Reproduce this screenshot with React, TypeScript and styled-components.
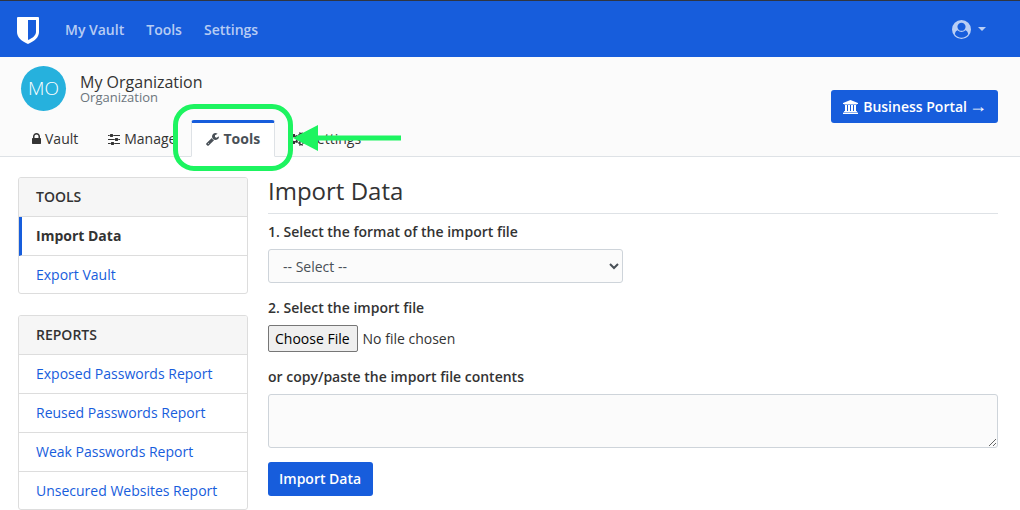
import React from "react";
import styled, { createGlobalStyle, css } from "styled-components";

const blue = "#175ddc";
const ink = "#333333";
const line = "#dddddd";
const marker = "#1df460";

const GlobalStyle = createGlobalStyle`
  *, *::before, *::after { box-sizing: border-box; }
  body {
    margin: 0;
    background: #ffffff;
    color: ${ink};
    font: 14px/22px "Open Sans", sans-serif;
  }
  a { color: ${blue}; text-decoration: none; }
  button, input, select, textarea { font: inherit; }
`;

const Navbar = styled.nav`
  display: flex;
  align-items: center;
  height: 57px;
  padding: 2px 34px 0 17px;
  border-top: 1px solid #2f3542;
  background: ${blue};
`;

const Brand = styled.a`
  display: flex;
  margin-right: 26px;
`;

const NavLinks = styled.div`
  display: flex;
  flex: 1;
  gap: 22px;
`;

const NavLink = styled.a`
  color: rgba(255, 255, 255, 0.7);
  font-weight: 600;
`;

const AccountButton = styled.button`
  display: flex;
  align-items: center;
  gap: 7px;
  padding: 0 0 2px;
  border: 0;
  background: none;
  color: rgba(255, 255, 255, 0.7);
`;

const Caret = styled.span`
  border: 4px solid transparent;
  border-top-color: currentColor;
  border-bottom: 0;
`;

const OrgHeader = styled.header`
  display: flex;
  flex-direction: column;
  padding: 9px 22px 0 17px;
  border-bottom: 1px solid #dee2e6;
  background: #fbfbfb;
`;

const OrgRow = styled.div`
  display: flex;
  align-items: flex-start;
  justify-content: space-between;
`;

const OrgIdentity = styled.div`
  display: flex;
  align-items: center;
  gap: 14px;
  padding-left: 4px;
`;

const Avatar = styled.div`
  width: 45px;
  height: 45px;
  border-radius: 50%;
  background: #26b1dd;
  color: #ffffff;
  font-size: 19px;
  font-weight: 300;
  line-height: 45px;
  text-align: center;
`;

const OrgName = styled.div`
  font-size: 16px;
  line-height: 18px;
`;

const OrgKind = styled.div`
  color: #6c757d;
  font-size: 13px;
  line-height: 13px;
`;

const PrimaryButton = styled.button`
  display: inline-flex;
  align-items: center;
  height: 34px;
  padding: 0 12px 0 11px;
  border: 0;
  border-radius: 3px;
  background: ${blue};
  color: #ffffff;
  font-weight: 600;
`;

const PortalButton = styled(PrimaryButton)`
  gap: 5px;
  height: 33px;
  margin-top: 24px;
  padding: 0 11px 0 12px;
`;

const Arrow = styled.span`
  margin-left: 2px;
  font-family: "Liberation Sans", sans-serif;
  font-size: 18px;
  font-weight: 400;
  line-height: 18px;
`;

const Tabs = styled.div`
  display: flex;
  margin-top: -3px;
`;

const Tab = styled.a<{ $active?: boolean }>`
  position: relative;
  display: flex;
  align-items: center;
  gap: 4px;
  height: 37px;
  margin-bottom: -1px;
  padding: 0 14px 2px;
  border: 1px solid transparent;
  border-top-width: 3px;
  border-radius: 3px 3px 0 0;
  color: ${ink};
  ${(p) =>
    p.$active &&
    css`
      border-color: ${blue} #dee2e6 #ffffff;
      background: #ffffff;
      color: #495057;
      font-weight: 700;
    `}
`;

const HighlightBox = styled.span`
  position: absolute;
  z-index: 1;
  inset: -19px -19px -15px;
  border: 5px solid ${marker};
  border-radius: 21px;
  pointer-events: none;
`;

const HighlightArrow = styled.svg`
  position: absolute;
  z-index: 2;
  top: 50%;
  left: 100%;
  margin: -15px 0 0 19px;
  pointer-events: none;
`;

const Page = styled.div`
  display: flex;
  align-items: flex-start;
  gap: 20px;
  padding: 20px 22px 0 18px;
`;

const Sidebar = styled.aside`
  display: flex;
  flex: 0 0 230px;
  flex-direction: column;
  gap: 21px;
`;

const Card = styled.section`
  overflow: hidden;
  border: 1px solid ${line};
  border-radius: 3px;
`;

const CardTitle = styled.h2`
  margin: 0;
  padding: 8px 17px;
  border-bottom: 1px solid ${line};
  background: #f6f6f6;
  font-size: 14px;
  font-weight: 600;
  line-height: 22px;
  text-transform: uppercase;
`;

const CardLink = styled.a<{ $active?: boolean }>`
  display: block;
  padding: 8px 17px;
  border-bottom: 1px solid ${line};
  &:last-child {
    padding-bottom: 7px;
    border-bottom: 0;
  }
  ${(p) =>
    p.$active &&
    css`
      padding-left: 14px;
      border-left: 3px solid ${blue};
      color: ${ink};
      font-weight: 700;
    `}
`;

const Main = styled.main`
  flex: 1;
  min-width: 0;
`;

const PageTitle = styled.h1`
  margin: 0 0 7px;
  padding-bottom: 8px;
  border-bottom: 1px solid #dee2e6;
  font-size: 24px;
  font-weight: 400;
  line-height: 28px;
`;

const Field = styled.div`
  display: flex;
  flex-direction: column;
  align-items: flex-start;
  gap: 6px;
  margin-bottom: 14px;
`;

const FieldLabel = styled.label`
  font-weight: 600;
`;

const FormatSelect = styled.select`
  width: calc(50% - 10px);
  height: 34px;
  padding: 0 10px;
  border: 1px solid #ced4da;
  border-radius: 3px;
  background: #fbfbfb;
  color: #495057;
`;

const FileInput = styled.input`
  height: 27px;
  &::file-selector-button {
    height: 27px;
    margin-right: 5px;
    padding: 0 7px 0 6px;
    border: 1px solid #767676;
    border-radius: 2px;
    background: #efefef;
    color: #000000;
    font: inherit;
  }
`;

const Contents = styled.textarea`
  display: block;
  width: 100%;
  height: 54px;
  padding: 6px 12px;
  border: 1px solid #ced4da;
  border-radius: 3px;
  background: #fbfbfb;
  resize: vertical;
`;

const Glyph = ({ d, box = 1792, size = 14 }: { d: string; box?: number; size?: number }) => (
  <svg
    width={Math.round((size * box) / 1792)}
    height={size}
    viewBox={`0 0 ${box} 1792`}
    fill="currentColor"
    fillRule="evenodd"
    aria-hidden="true"
  >
    <path d={d} />
  </svg>
);

const lock =
  "M320 768h512v-192q0-106-75-181t-181-75-181 75-75 181v192zm832 96v576q0 40-28 68t-68 28h-960q-40 0-68-28t-28-68v-576q0-40 28-68t68-28h32v-192q0-184 132-316t316-132 316 132 132 316v192h32q40 0 68 28t28 68z";
const sliders =
  "M352 1408v128h-352v-128h352zm352-128q26 0 45 19t19 45v256q0 26-19 45t-45 19h-256q-26 0-45-19t-19-45v-256q0-26 19-45t45-19h256zm160-384v128h-864v-128h864zm-640-512v128h-224v-128h224zm1312 1024v128h-736v-128h736zm-960-1152q26 0 45 19t19 45v256q0 26-19 45t-45 19h-256q-26 0-45-19t-19-45v-256q0-26 19-45t45-19h256zm640 512q26 0 45 19t19 45v256q0 26-19 45t-45 19h-256q-26 0-45-19t-19-45v-256q0-26 19-45t45-19h256zm320 128v128h-224v-128h224zm0-512v128h-864v-128h864z";
const wrench =
  "M384 1472q0-26-19-45t-45-19-45 19-19 45 19 45 45 19 45-19 19-45zm644-420l-682 682q-37 37-90 37-52 0-91-37l-106-108q-38-36-38-90 0-53 38-91l681-681q39 98 114.5 173.5t173.5 114.5zm634-435q0 39-23 106-47 134-164.5 217.5t-258.5 83.5q-185 0-316.5-131.5t-131.5-316.5 131.5-316.5 316.5-131.5q58 0 121.5 16.5t107.5 46.5q16 11 16 28t-16 28l-293 169v224l193 107q5-3 79-48.5t135.5-81 70.5-35.5q15 0 23.5 10t8.5 25z";
const smallCog =
  "v140q0 16-149 31-12 27-30 52 51 113 51 138 0 4-4 7-122 71-124 71-8 0-46-47t-52-68q-20 2-30 2t-30-2q-14 21-52 68t-46 47q-2 0-124-71-4-3-4-7 0-25 51-138-18-25-30-52-149-15-149-31v-140q0-16 149-31 13-29 30-52-51-113-51-138 0-4 4-7 4-2 35-20t59-34 30-16q8 0 46 46.5t52 67.5q20-2 30-2t30 2q51-71 92-112l6-2q4 0 124 70 4 3 4 7 0 25-51 138 17 23 30 52 149 15 149 31z";
const cogs =
  "M832 896q0-106-75-181t-181-75-181 75-75 181 75 181 181 75 181-75 75-181zm768 512q0-52-38-90t-90-38-90 38-38 90q0 53 37.5 90.5t90.5 37.5 90.5-37.5 37.5-90.5zm0-1024q0-52-38-90t-90-38-90 38-38 90q0 53 37.5 90.5t90.5 37.5 90.5-37.5 37.5-90.5zm-448 421v185q0 10-7 19.5t-16 10.5l-155 24q-11 35-32 76 34 48 90 115 7 11 7 20 0 12-7 19-23 30-82.5 89.5t-78.5 59.5q-11 0-21-7l-115-90q-37 19-77 31-11 108-23 155-7 24-30 24h-186q-11 0-20-7.5t-10-17.5l-23-153q-34-10-75-31l-118 89q-7 7-20 7-11 0-21-8-144-133-144-160 0-9 7-19 10-14 41-53t47-61q-23-44-35-82l-152-24q-10-1-17-9.5t-7-19.5v-185q0-10 7-19.5t16-10.5l155-24q11-35 32-76-34-48-90-115-7-11-7-20 0-12 7-20 22-30 82-89t79-59q11 0 21 7l115 90q34-18 77-32 11-108 23-154 7-24 30-24h186q11 0 20 7.5t10 17.5l23 153q34 10 75 31l118-89q8-7 20-7 11 0 21 8 144 133 144 160 0 8-7 19-12 16-42 54t-45 60q23 48 34 82l152 23q10 2 17 10.5t7 19.5zM1792 1338" +
  smallCog +
  "M1792 314" +
  smallCog;
const university =
  "M960 0l960 384v128h-128q0 26-20.5 45t-48.5 19h-1526q-28 0-48.5-19t-20.5-45h-128v-128zm-704 640h256v768h128v-768h256v768h128v-768h256v768h128v-768h256v768h59q28 0 48.5 19t20.5 45v64h-1664v-64q0-26 20.5-45t48.5-19h59v-768zm1595 960q28 0 48.5 19t20.5 45v128h-1920v-128q0-26 20.5-45t48.5-19h1782z";
const userCircle =
  "M1523 1339q-22-155-87.5-257.5t-184.5-118.5q-67 74-159.5 115.5t-195.5 41.5-195.5-41.5-159.5-115.5q-119 16-184.5 118.5t-87.5 257.5q106 150 271 237.5t356 87.5 356-87.5 271-237.5zm-243-699q0-159-112.5-271.5t-271.5-112.5-271.5 112.5-112.5 271.5 112.5 271.5 271.5 112.5 271.5-112.5 112.5-271.5zM896 0a896 896 0 1 0 0 1792a896 896 0 1 0 0-1792z";

const Shield = () => (
  <svg width="22" height="27" viewBox="0 0 22 27" aria-hidden="true">
    <path
      fill="#ffffff"
      fillRule="evenodd"
      d="M1 0h20q1 0 1 1v14c0 5-4 9-11 12C4 24 0 20 0 15V1q0-1 1-1zM11 3v20c5-2 8-5 8-8V3z"
    />
  </svg>
);

const reports = [
  "Exposed Passwords Report",
  "Reused Passwords Report",
  "Weak Passwords Report",
  "Unsecured Websites Report",
];

export default function App() {
  return (
    <>
      <GlobalStyle />
      <Navbar>
        <Brand href="#" aria-label="Home">
          <Shield />
        </Brand>
        <NavLinks>
          <NavLink href="#">My Vault</NavLink>
          <NavLink href="#">Tools</NavLink>
          <NavLink href="#">Settings</NavLink>
        </NavLinks>
        <AccountButton aria-label="Account">
          <Glyph d={userCircle} size={19} />
          <Caret />
        </AccountButton>
      </Navbar>
      <OrgHeader>
        <OrgRow>
          <OrgIdentity>
            <Avatar>MO</Avatar>
            <div>
              <OrgName>My Organization</OrgName>
              <OrgKind>Organization</OrgKind>
            </div>
          </OrgIdentity>
          <PortalButton>
            <Glyph d={university} box={1920} />
            <span>
              Business Portal<Arrow>→</Arrow>
            </span>
          </PortalButton>
        </OrgRow>
        <Tabs>
          <Tab href="#">
            <Glyph d={lock} box={1152} />
            Vault
          </Tab>
          <Tab href="#">
            <Glyph d={sliders} box={1536} />
            Manage
          </Tab>
          <Tab href="#" $active>
            <Glyph d={wrench} box={1664} />
            Tools
            <HighlightBox />
            <HighlightArrow width="108" height="26" viewBox="0 0 108 26" fill={marker} aria-hidden="true">
              <path d="M0 13L25 0V10.500H108V15.500H25V26z" />
            </HighlightArrow>
          </Tab>
          <Tab href="#">
            <Glyph d={cogs} box={1920} />
            Settings
          </Tab>
        </Tabs>
      </OrgHeader>
      <Page>
        <Sidebar>
          <Card>
            <CardTitle>Tools</CardTitle>
            <CardLink href="#" $active>
              Import Data
            </CardLink>
            <CardLink href="#">Export Vault</CardLink>
          </Card>
          <Card>
            <CardTitle>Reports</CardTitle>
            {reports.map((name) => (
              <CardLink href="#" key={name}>
                {name}
              </CardLink>
            ))}
          </Card>
        </Sidebar>
        <Main>
          <PageTitle>Import Data</PageTitle>
          <form>
            <Field>
              <FieldLabel htmlFor="format">1. Select the format of the import file</FieldLabel>
              <FormatSelect id="format">
                <option>-- Select --</option>
              </FormatSelect>
            </Field>
            <Field>
              <FieldLabel htmlFor="file">2. Select the import file</FieldLabel>
              <FileInput id="file" type="file" />
            </Field>
            <Field>
              <FieldLabel htmlFor="contents">or copy/paste the import file contents</FieldLabel>
              <Contents id="contents" />
            </Field>
            <PrimaryButton type="button">Import Data</PrimaryButton>
          </form>
        </Main>
      </Page>
    </>
  );
}
